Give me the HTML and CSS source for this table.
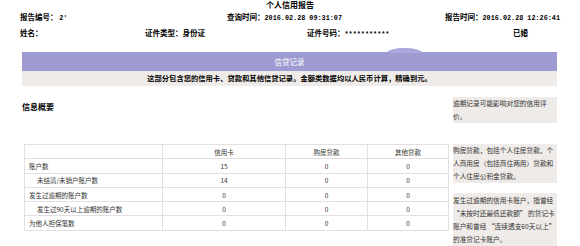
FILE: index.html
```html
<!DOCTYPE html>
<html lang="zh-CN">
<head>
<meta charset="utf-8">
<title>个人信用报告</title>
<link rel="stylesheet" href="styles.css">
</head>
<body>
<div class="page">
  <h1 class="title">个人信用报告</h1>
  <div class="meta meta-1">
    <div>报告编号： <span class="num">2'</span></div>
    <div>查询时间：<span class="num">2016.02.28 09:31:07</span></div>
    <div>报告时间：<span class="num">2016.02.28 12:26:41</span></div>
  </div>
  <div class="meta meta-2">
    <div>姓名：</div>
    <div>证件类型：身份证</div>
    <div>证件号码：<span class="num">***********</span></div>
    <div>已婚</div>
  </div>

  <section class="section">
    <div class="section-bar">
      <span class="tab"></span>
      信贷记录
    </div>
    <div class="section-desc">这部分包含您的信用卡、贷款和其他信贷记录。金额类数据均以人民币计算，精确到元。</div>
  </section>

  <div class="content">
    <div class="main">
      <h2 class="subtitle">信息概要</h2>
      <table class="summary">
        <colgroup>
          <col class="c1"><col class="c2"><col class="c3"><col class="c4">
        </colgroup>
        <thead>
          <tr><th></th><th>信用卡</th><th>购房贷款</th><th>其他贷款</th></tr>
        </thead>
        <tbody>
          <tr><td class="label">账户数</td><td>15</td><td>0</td><td>0</td></tr>
          <tr><td class="label sub">未结清/未销户账户数</td><td>14</td><td>0</td><td>0</td></tr>
          <tr><td class="label">发生过逾期的账户数</td><td>0</td><td>0</td><td>0</td></tr>
          <tr><td class="label sub">发生过90天以上逾期的账户数</td><td>0</td><td>0</td><td>0</td></tr>
          <tr><td class="label">为他人担保笔数</td><td>0</td><td>0</td><td>0</td></tr>
        </tbody>
      </table>
    </div>
    <aside class="notes">
      <p class="note note-1">逾期记录可能影响对您的信用评价。</p>
      <p class="note note-2">购房贷款，包括个人住房贷款、个人商用房（包括商住两用）贷款和个人住房公积金贷款。</p>
      <p class="note note-3">发生过逾期的信用卡账户，指曾经 “未按时还最低还款额” 的贷记卡账户和曾经 “连续透支60天以上” 的准贷记卡账户。</p>
    </aside>
  </div>
</div>
</body>
</html>
```

FILE: styles.css
```css
* { box-sizing: border-box; }
html, body { margin: 0; padding: 0; background: #fff; }
body {
  font-family: "Noto Sans CJK SC", "Liberation Sans", sans-serif;
  color: #000;
}
.page { width: 580px; height: 246px; overflow: hidden; position: relative; }

.title {
  margin: 0;
  font-size: 8px;
  line-height: 10px;
  font-weight: bold;
  text-align: center;
}

.meta {
  display: grid;
  font-size: 7.5px;
  font-weight: bold;
  line-height: 10px;
  padding-left: 20px;
  white-space: nowrap;
}
.meta-1 { grid-template-columns: 207px 218px auto; margin-top: 2px; }
.meta-2 { grid-template-columns: 125px 162px 206px auto; margin-top: 5px; }
.num { font-family: "Liberation Mono", monospace; font-size: 6.8px; font-weight: bold; }

.section { margin: 13px 23px 0 22px; }
.section-bar {
  position: relative;
  height: 19px;
  background: #9e9bd2;
  color: #fff;
  font-size: 7.5px;
  line-height: 19px;
  text-align: center;
}
.tab {
  position: absolute;
  left: 365px;
  top: -4px;
  width: 35px;
  height: 5px;
  border-radius: 50% 50% 0 0 / 100% 100% 0 0;
  background: #aaa7dc;
}
.section-desc {
  height: 15px;
  background: #efebe9;
  font-size: 7.3px;
  font-weight: bold;
  line-height: 15px;
  text-align: center;
}

.content {
  display: grid;
  grid-template-columns: 431px 104px;
  margin: 11px 0 0 22px;
}
.subtitle {
  margin: 5px 0 0 0;
  font-size: 8px;
  line-height: 10px;
  font-weight: bold;
}

.summary {
  margin: 32px 0 0 2px;
  width: 424px;
  border-collapse: collapse;
  table-layout: fixed;
  font-size: 6.5px;
  color: #333;
}
.summary .c1 { width: 138px; }
.summary .c2 { width: 123px; }
.summary .c3 { width: 82px; }
.summary .c4 { width: 81px; }
.summary th, .summary td {
  height: 14.3px;
  padding: 0;
  border: 1px solid #e2e0e0;
  text-align: center;
  font-weight: normal;
  line-height: 12px;
  white-space: nowrap;
}
.summary td.label { text-align: left; padding-left: 4px; }
.summary td.label.sub { padding-left: 12px; }

.notes { display: flex; flex-direction: column; }
.note {
  margin: 0;
  background: #efebe9;
  font-size: 6.7px;
  line-height: 13px;
  color: #333;
}
.note-2 { margin-top: 21px; }
.note-3 { margin-top: 10px; padding-top: 1px; padding-bottom: 4px; }
```
